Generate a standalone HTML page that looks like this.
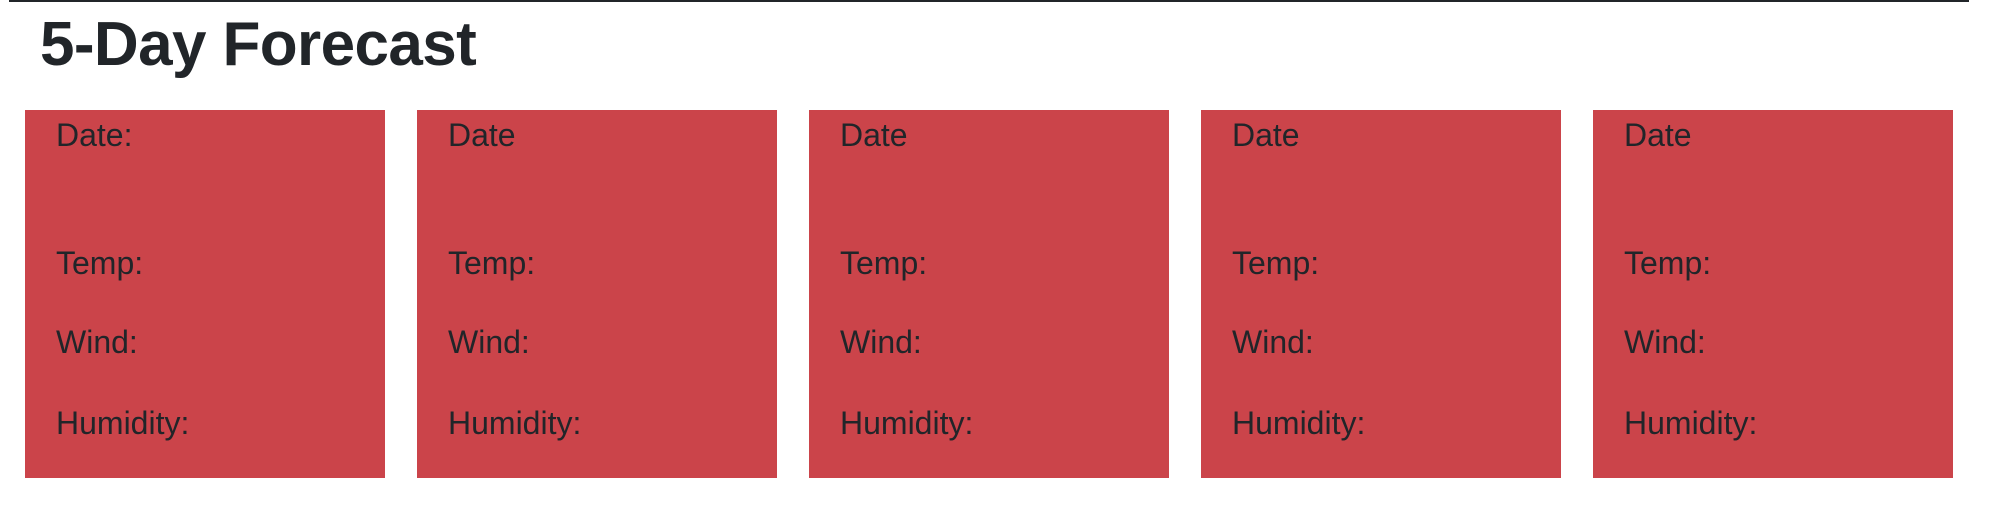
<!DOCTYPE html>
<html><head><style>
html,body{margin:0;padding:0;background:#fff;width:1994px;height:510px;overflow:hidden;}
body{font-family:"Liberation Sans",Arial,sans-serif;color:#212529;position:relative;}
.bar{position:absolute;left:9px;top:0;width:1960px;height:2px;background:#212529;}
h1{position:absolute;left:40px;top:0;margin:0;font-size:62px;font-weight:bold;letter-spacing:-0.6px;line-height:1;padding-top:14px;}
.card{position:absolute;top:110px;width:360px;height:368px;background:#cb444a;}
.card span{position:absolute;left:31px;font-size:32px;line-height:1;}
</style></head><body>
<div class="bar"></div>
<h1>5-Day Forecast</h1>
<div class="card" style="left:25px"><span style="top:9px">Date:</span><span style="top:137px">Temp:</span><span style="top:216px">Wind:</span><span style="top:297px">Humidity:</span></div>
<div class="card" style="left:417px"><span style="top:9px">Date</span><span style="top:137px">Temp:</span><span style="top:216px">Wind:</span><span style="top:297px">Humidity:</span></div>
<div class="card" style="left:809px"><span style="top:9px">Date</span><span style="top:137px">Temp:</span><span style="top:216px">Wind:</span><span style="top:297px">Humidity:</span></div>
<div class="card" style="left:1201px"><span style="top:9px">Date</span><span style="top:137px">Temp:</span><span style="top:216px">Wind:</span><span style="top:297px">Humidity:</span></div>
<div class="card" style="left:1593px"><span style="top:9px">Date</span><span style="top:137px">Temp:</span><span style="top:216px">Wind:</span><span style="top:297px">Humidity:</span></div>
</body></html>
